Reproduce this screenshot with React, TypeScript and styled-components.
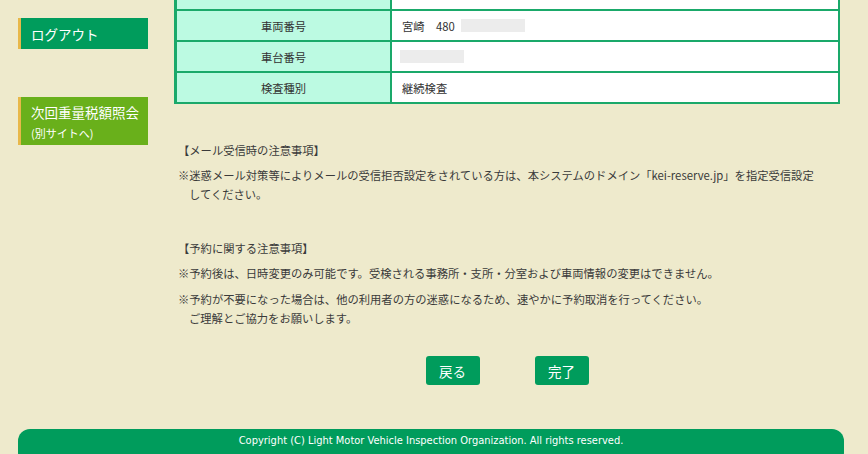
import React from "react";
import styled, { createGlobalStyle } from "styled-components";

const GlobalStyle = createGlobalStyle`
  html, body {
    margin: 0;
    padding: 0;
    background: #eeeacc;
  }
  body {
    font-family: "Noto Sans CJK JP", "Noto Sans", sans-serif;
    color: #333;
  }
`;

const Page = styled.div`
  display: flex;
  flex-direction: column;
  padding: 0 24px 0 18px;
  min-height: 454px;
  overflow: hidden;
`;

const Columns = styled.div`
  display: flex;
  align-items: flex-start;
`;

const Side = styled.div`
  width: 130px;
  flex-shrink: 0;
  padding-top: 18px;
  display: flex;
  flex-direction: column;
  gap: 48px;
`;

const SideButton = styled.a<{ $tone: "green" | "lime" }>`
  display: flex;
  flex-direction: column;
  justify-content: center;
  box-sizing: border-box;
  min-height: 31px;
  padding: ${(p) => (p.$tone === "lime" ? "5px 0 1px 10px" : "0 0 0 10px")};
  border-left: 3px solid #e8b84a;
  background: ${(p) => (p.$tone === "lime" ? "#69b01b" : "#009c5c")};
  color: #fff;
  font-size: 13.5px;
  line-height: 20px;
  text-decoration: none;
  cursor: pointer;
`;

const SubLabel = styled.span`
  font-size: 11px;
  line-height: 22px;
`;

const Main = styled.div`
  margin-left: 26px;
  width: 666px;
  display: flex;
  flex-direction: column;
`;

const InfoTable = styled.div`
  display: grid;
  grid-template-columns: 215px 1fr;
  border-left: 3px solid #1aa96a;
  border-right: 2px solid #1aa96a;
  font-size: 11.3px;
`;

const Cell = styled.div<{ $head?: boolean; $h?: number }>`
  box-sizing: border-box;
  height: ${(p) => (p.$h ?? 31)}px;
  border-bottom: 2px solid #1aa96a;
  display: flex;
  align-items: center;
  background: ${(p) => (p.$head ? "#bcfae2" : "#fff")};
  justify-content: ${(p) => (p.$head ? "center" : "flex-start")};
  padding-left: ${(p) => (p.$head ? "0" : "10px")};
  border-right: ${(p) => (p.$head ? "2px solid #1aa96a" : "none")};
  color: #333;
`;

const Masked = styled.span<{ $gap: number }>`
  display: inline-block;
  width: 64px;
  height: 13px;
  background: #ececec;
  margin-left: ${(p) => p.$gap}px;
`;

const Notes = styled.div`
  margin-top: 37px;
  padding-left: 4px;
  font-size: 11.3px;
  line-height: 19px;
  color: #3a3a3a;
`;

const NoteGroup = styled.section`
  & + & {
    margin-top: 35px;
  }
`;

const NoteTitle = styled.div`
  margin-bottom: 6px;
`;

const NoteItem = styled.p`
  margin: 0 0 7px;
  padding-left: 11px;
  text-indent: -11px;
  &:last-child {
    margin-bottom: 0;
  }
`;

const Actions = styled.div`
  display: flex;
  justify-content: center;
  gap: 55px;
  margin-top: 28px;
`;

const ActionButton = styled.button`
  width: 54px;
  height: 29px;
  border: none;
  border-radius: 3px;
  background: #009c5c;
  color: #fff;
  font-family: "Noto Sans CJK JP", sans-serif;
  font-size: 13.5px;
  padding: 0;
  cursor: pointer;
`;

const Footer = styled.footer`
  margin-top: 44px;
  height: 36px;
  border-radius: 12px;
  background: #009c5c;
  color: #fff;
  font-family: "Liberation Sans Narrow", "DejaVu Sans Condensed", "Liberation Sans", sans-serif;
  font-size: 11px;
  text-align: center;
  padding-top: 5px;
  box-sizing: border-box;
`;

const rows: { label: string; value: React.ReactNode }[] = [
  {
    label: "車両番号",
    value: (
      <>
        宮崎　480
        <Masked $gap={6} />
      </>
    ),
  },
  { label: "車台番号", value: <Masked $gap={-2} /> },
  { label: "検査種別", value: "継続検査" },
];

export default function App() {
  return (
    <>
      <GlobalStyle />
      <Page>
        <Columns>
          <Side>
            <SideButton $tone="green">ログアウト</SideButton>
            <SideButton $tone="lime">
              次回重量税額照会
              <SubLabel>(別サイトへ)</SubLabel>
            </SideButton>
          </Side>
          <Main>
            <InfoTable>
              <Cell $head $h={11} />
              <Cell $h={11} />
              {rows.map((r) => (
                <React.Fragment key={r.label}>
                  <Cell $head>{r.label}</Cell>
                  <Cell>{r.value}</Cell>
                </React.Fragment>
              ))}
            </InfoTable>
            <Notes>
              <NoteGroup>
                <NoteTitle>【メール受信時の注意事項】</NoteTitle>
                <NoteItem>
                  ※迷惑メール対策等によりメールの受信拒否設定をされている方は、本システムのドメイン「kei-reserve.jp」を指定受信設定
                  <br />
                  してください。
                </NoteItem>
              </NoteGroup>
              <NoteGroup>
                <NoteTitle>【予約に関する注意事項】</NoteTitle>
                <NoteItem>
                  ※予約後は、日時変更のみ可能です。受検される事務所・支所・分室および車両情報の変更はできません。
                </NoteItem>
                <NoteItem>
                  ※予約が不要になった場合は、他の利用者の方の迷惑になるため、速やかに予約取消を行ってください。
                  <br />
                  ご理解とご協力をお願いします。
                </NoteItem>
              </NoteGroup>
            </Notes>
            <Actions>
              <ActionButton>戻る</ActionButton>
              <ActionButton>完了</ActionButton>
            </Actions>
          </Main>
        </Columns>
        <Footer>Copyright (C) Light Motor Vehicle Inspection Organization. All rights reserved.</Footer>
      </Page>
    </>
  );
}
